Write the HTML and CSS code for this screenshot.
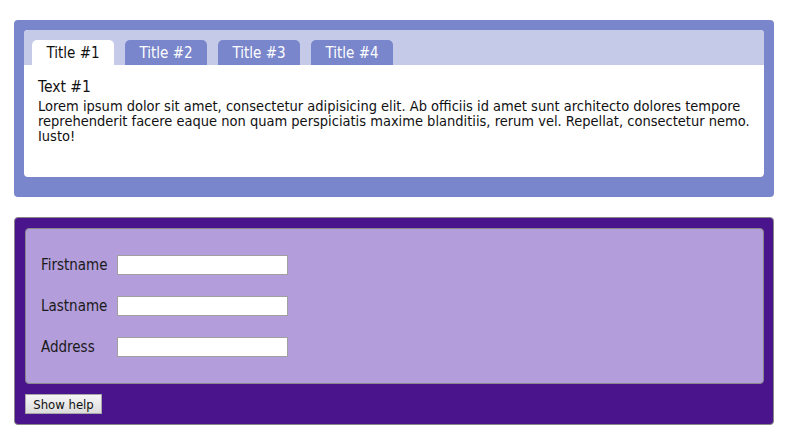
FILE: index.html
```html
<!DOCTYPE html>
<html>
<head>
<meta charset="utf-8">
<link rel="stylesheet" href="styles.css">
</head>
<body>
<div class="page">
  <div class="tabs-panel">
    <div class="tabs-inner">
      <div class="tab-bar">
        <div class="tab active">Title #1</div>
        <div class="tab">Title #2</div>
        <div class="tab">Title #3</div>
        <div class="tab">Title #4</div>
      </div>
      <div class="tab-content">
        <div class="tab-heading">Text #1</div>
        <p class="tab-text">Lorem ipsum dolor sit amet, consectetur adipisicing elit. Ab officiis id amet sunt architecto dolores tempore reprehenderit facere eaque non quam perspiciatis maxime blanditiis, rerum vel. Repellat, consectetur nemo. Iusto!</p>
      </div>
    </div>
  </div>
  <div class="form-panel">
    <div class="form-inner">
      <div class="form-row"><label class="form-label">Firstname</label><input class="form-input" type="text"></div>
      <div class="form-row"><label class="form-label">Lastname</label><input class="form-input" type="text"></div>
      <div class="form-row"><label class="form-label">Address</label><input class="form-input" type="text"></div>
    </div>
    <button class="help-btn">Show help</button>
  </div>
</div>
</body>
</html>
```
FILE: styles.css
```css
html, body {
  margin: 0;
  padding: 0;
  background: #fff;
}
body {
  font-family: "DejaVu Sans Condensed", "DejaVu Sans", sans-serif;
  font-size: 14.5px;
  color: #111;
}
.page {
  padding: 20px 14px 0;
  display: flex;
  flex-direction: column;
  gap: 20px;
}
.tabs-panel {
  background: #7986cb;
  border-radius: 4px;
  padding: 10px 10px 20px;
}
.tabs-inner {
  border-radius: 4px;
  overflow: hidden;
  background: #fff;
}
.tab-bar {
  background: #c5cae9;
  display: flex;
  gap: 11px;
  padding: 10px 0 0 8px;
}
.tab {
  width: 82px;
  height: 25px;
  box-sizing: border-box;
  padding-top: 1px;
  line-height: 24px;
  text-align: center;
  background: #7986cb;
  color: #fff;
  border-radius: 5px 5px 0 0;
  font-size: 15px;
}
.tab.active {
  background: #fff;
  color: #111;
}
.tab-content {
  height: 112px;
  box-sizing: border-box;
  padding: 15px 14px 0;
  line-height: 15px;
}
.tab-heading {
  font-size: 15.5px;
  margin-bottom: 4px;
}
.tab-text {
  margin: 0;
}
.form-panel {
  background: #4a148c;
  border: 1px solid #888;
  border-radius: 4px;
  padding: 10px 9px 10px 10px;
}
.form-inner {
  background: #b39ddb;
  border: 1px solid #888;
  border-radius: 4px;
  padding: 26px 15px;
  display: flex;
  flex-direction: column;
  gap: 21px;
}
.form-row {
  display: flex;
  align-items: center;
  height: 20px;
}
.form-label {
  width: 76px;
  font-size: 15px;
  color: #1a1a1a;
}
.form-input {
  width: 171px;
  height: 20px;
  box-sizing: border-box;
  margin: 0;
  border: 1px solid #a0a0a0;
  background: #fff;
  padding: 0 2px;
}
.help-btn {
  display: block;
  margin-top: 10px;
  width: 77px;
  height: 20px;
  padding: 0;
  font-family: "DejaVu Sans Condensed", "DejaVu Sans", sans-serif;
  font-size: 13px;
  color: #111;
  border: 1px solid #a8a8a8;
  border-radius: 0;
  background: linear-gradient(#f6f6f6, #dcdcdc);
}
```
